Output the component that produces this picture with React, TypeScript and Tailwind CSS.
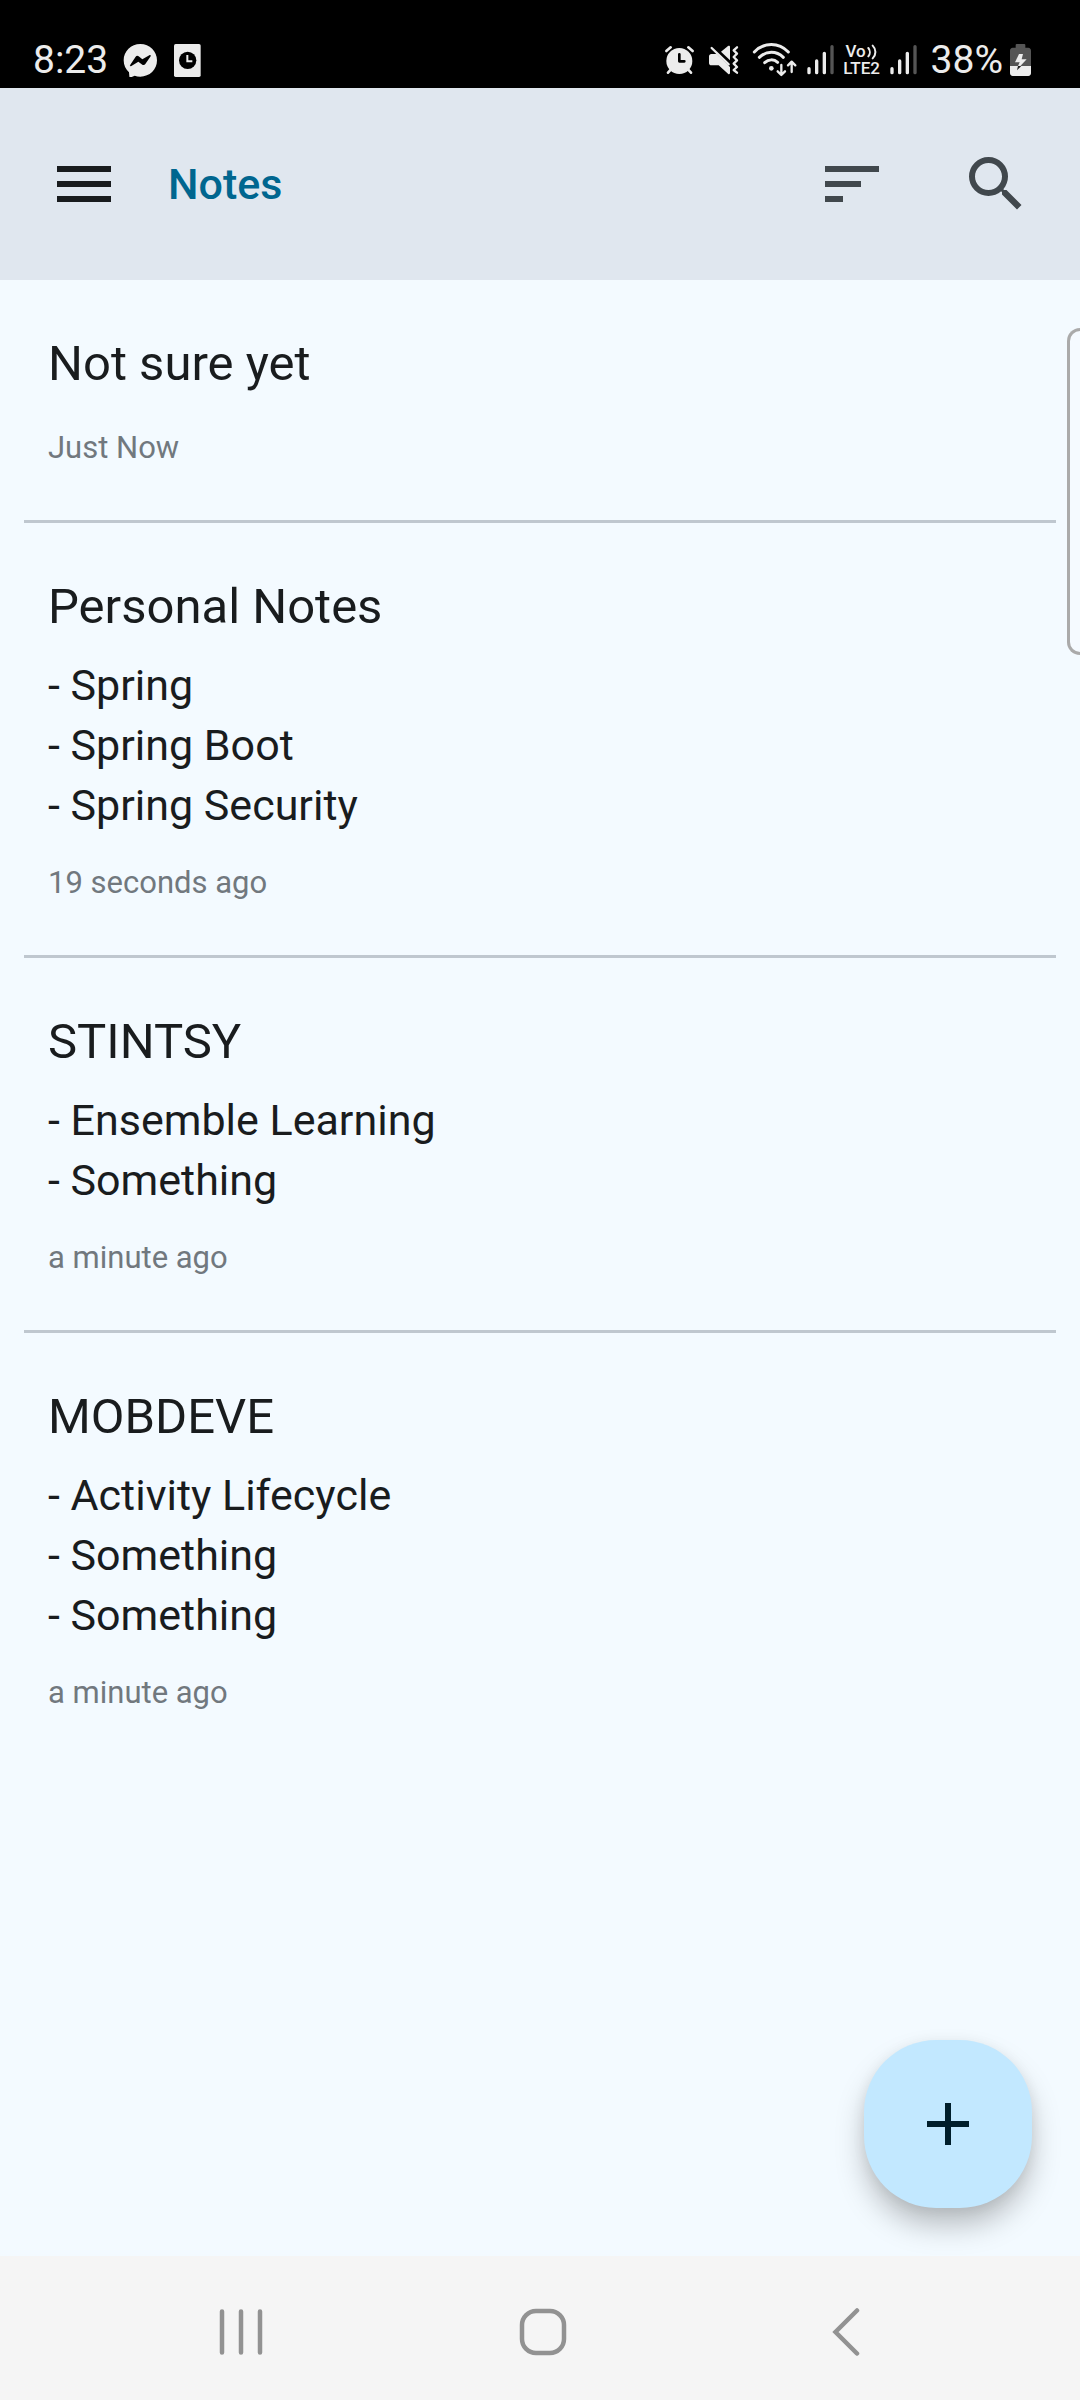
import React from "react";

type Note = { title: string; lines: string[]; time: string };

const notes: Note[] = [
  { title: "Not sure yet", lines: [], time: "Just Now" },
  {
    title: "Personal Notes",
    lines: ["- Spring", "- Spring Boot", "- Spring Security"],
    time: "19 seconds ago",
  },
  {
    title: "STINTSY",
    lines: ["- Ensemble Learning", "- Something"],
    time: "a minute ago",
  },
  {
    title: "MOBDEVE",
    lines: ["- Activity Lifecycle", "- Something", "- Something"],
    time: "a minute ago",
  },
];

function MessengerIcon() {
  return (
    <svg className="h-[34px] w-[35px]" viewBox="369 69 105 102" aria-hidden="true">
      <path
        fill="#ececec"
        d="M421 72C449 72 471 94 471 121C471 149 449 170 421 170C415 170 409 169 404 167L393 172C390 173 388 172 388 169L387 157C377 148 371 136 371 121C371 94 393 72 421 72Z"
      />
      <path
        fill="#000"
        d="M390 136L407 110C409 107 413 106 416 109L427 118L448 106C451 104 453 107 452 109L436 132C434 135 430 136 427 134L415 125L394 138C391 140 389 138 390 136Z"
      />
    </svg>
  );
}

function ClockCardIcon() {
  return (
    <svg className="h-[34px] w-[29px]" viewBox="519 69 87 102" aria-hidden="true">
      <rect x="522" y="72" width="80" height="99" rx="5" fill="#ececec" />
      <circle cx="563" cy="121" r="26" fill="#000" />
      <path d="M562 105V124H577" fill="none" stroke="#ececec" strokeWidth="6" />
    </svg>
  );
}

function AlarmIcon() {
  return (
    <svg className="h-[34px] w-[31px]" viewBox="69 69 93 102" aria-hidden="true">
      <g stroke="#ececec" strokeLinecap="round" strokeWidth="8" fill="none">
        <path d="M76 93L89 82M155 93L142 82M90 148L81 158M141 148L150 158" />
      </g>
      <circle cx="115" cy="123" r="39" fill="#ececec" />
      <path
        d="M115 103V124H130"
        fill="none"
        stroke="#000"
        strokeWidth="8"
        strokeLinecap="round"
        strokeLinejoin="round"
      />
    </svg>
  );
}

function MuteIcon() {
  return (
    <svg className="h-[34px] w-[31px]" viewBox="204 69 93 102" aria-hidden="true">
      <g fill="#ececec">
        <path d="M214 102H230L270 141V159C270 162 267 164 264 161L236 136H214C210 136 207 133 207 129V109C207 105 210 102 214 102Z" />
        <path d="M243 95L264 78C267 76 270 77 270 81V121Z" />
      </g>
      <path d="M215 84L266 133" stroke="#ececec" strokeWidth="7" strokeLinecap="round" />
      <path
        d="M291 82L281 91L291 101L281 111L291 121L281 131L291 141L281 150L291 158"
        fill="none"
        stroke="#ececec"
        strokeWidth="7"
        strokeLinecap="round"
        strokeLinejoin="round"
      />
    </svg>
  );
}

function WifiIcon() {
  return (
    <svg className="h-[34px] w-[45px]" viewBox="336 69 135 102" aria-hidden="true">
      <g fill="none" stroke="#ececec" strokeLinecap="round">
        <path d="M343 96C372 66 416 66 445 96" strokeWidth="9" />
        <path d="M358 112C379 92 409 92 430 112" strokeWidth="9" />
        <path d="M374 128C386 117 402 117 413 127" strokeWidth="9" />
        <g strokeWidth="7" strokeLinejoin="round">
          <path d="M424 135V164M413 154L424 165L435 154" />
          <path d="M455 156V126M444 136L455 125L466 136" />
        </g>
      </g>
      <circle cx="394" cy="145" r="7" fill="#ececec" />
    </svg>
  );
}

function SignalIcon() {
  return (
    <svg className="h-[34px] w-[29px]" viewBox="495 69 87 102" aria-hidden="true">
      <g strokeWidth="10" strokeLinecap="round">
        <path d="M504 146V158M527 123V158M550 100V158" stroke="#ececec" />
        <path d="M573 80V158" stroke="#555" />
      </g>
    </svg>
  );
}

function VolteBadge() {
  return (
    <div className="flex w-10 flex-col items-center text-[17px] leading-[17px] font-medium">
      <div className="flex items-center justify-center gap-px">
        <span>Vo</span>
        <svg className="h-4 w-[11px]" viewBox="0 0 33 48" aria-hidden="true">
          <g fill="none" stroke="#ececec" strokeWidth="6" strokeLinecap="round">
            <path d="M4 12C10 19 10 30 4 37" />
            <path d="M17 5C28 16 28 32 17 43" />
          </g>
        </svg>
      </div>
      <span>LTE2</span>
    </div>
  );
}

function BatteryIcon() {
  return (
    <svg className="h-[34px] w-[23px]" viewBox="507 69 69 102" aria-hidden="true">
      <path
        fill="#555"
        d="M530 72H553C555 72 556 73 556 75V83H565C570 83 573 87 573 92V140H510V92C510 87 513 83 518 83H527V75C527 73 528 72 530 72Z"
      />
      <path fill="#ececec" d="M510 138H573V159C573 164 570 168 565 168H518C513 168 510 164 510 159Z" />
      <path fill="#ececec" d="M537 102H549L545 118H560L541 138H534L539 127H525Z" />
      <path fill="#222" d="M534 138H544L531 151Z" />
    </svg>
  );
}

function StatusBar() {
  return (
    <div className="flex h-[88px] shrink-0 items-center bg-black pt-8 pr-12 pl-[33px] text-[39px] leading-none text-[#ececec]">
      <span>8:23</span>
      <div className="ml-[15px] flex items-center gap-[15px]">
        <MessengerIcon />
        <ClockCardIcon />
      </div>
      <div className="ml-auto flex items-center">
        <div className="mr-[9px] flex items-center gap-[13px]">
          <AlarmIcon />
          <MuteIcon />
          <WifiIcon />
        </div>
        <div className="flex items-center gap-[7px]">
          <SignalIcon />
          <VolteBadge />
          <SignalIcon />
        </div>
        <span className="mr-1.5 ml-[13px]">38%</span>
        <BatteryIcon />
      </div>
    </div>
  );
}

function AppBar() {
  return (
    <header className="flex h-48 shrink-0 items-center bg-[#e0e7ef] px-12">
      <button type="button" aria-label="Open menu" className="text-[#191c1e]">
        <svg className="size-[72px]" viewBox="0 0 24 24" fill="currentColor">
          <path d="M3 6h18v2H3zM3 11h18v2H3zM3 16h18v2H3z" />
        </svg>
      </button>
      <h1 className="ml-12 text-[43px] leading-[60px] font-medium text-[#00668f]">Notes</h1>
      <div className="ml-auto flex items-center gap-[72px] text-[#41484d]">
        <button type="button" aria-label="Sort notes">
          <svg className="size-[72px]" viewBox="0 0 24 24" fill="currentColor">
            <path d="M3 6h18v2H3zM3 11h12v2H3zM3 16h6v2H3z" />
          </svg>
        </button>
        <button type="button" aria-label="Search notes">
          <svg className="size-[72px]" viewBox="0 0 24 24" fill="currentColor">
            <path d="M9.5 3A6.5 6.5 0 0 1 16 9.5C16 11.11 15.41 12.59 14.44 13.73L14.71 14H15.5L20.5 19L19 20.5L14 15.5V14.71L13.73 14.44C12.59 15.41 11.11 16 9.5 16A6.5 6.5 0 0 1 3 9.5A6.5 6.5 0 0 1 9.5 3M9.5 5C7 5 5 7 5 9.5C5 12 7 14 9.5 14C12 14 14 12 14 9.5C14 7 12 5 9.5 5Z" />
          </svg>
        </button>
      </div>
    </header>
  );
}

function NoteItem({ note }: { note: Note }) {
  return (
    <li className="px-6 py-12">
      <h2 className="text-[49px] leading-[72px]">{note.title}</h2>
      {note.lines.length > 0 && (
        <div className="mt-3 text-[43px] leading-[60px]">
          {note.lines.map((line, i) => (
            <p key={i}>{line}</p>
          ))}
        </div>
      )}
      <p className="mt-6 text-[31px] leading-[48px] text-[#71787e]">{note.time}</p>
    </li>
  );
}

function NavigationBar() {
  return (
    <nav className="grid h-36 shrink-0 grid-cols-3 bg-[#f5f5f5] pr-[84px] pl-[90px] text-[#929292]">
      <button type="button" aria-label="Recent apps" className="flex items-center justify-center pt-2">
        <svg className="size-12" viewBox="0 0 48 48" stroke="currentColor" strokeWidth="4.5" strokeLinecap="round">
          <path d="M5 3.5V44.5M24 3.5V44.5M43 3.5V44.5" />
        </svg>
      </button>
      <button type="button" aria-label="Home" className="flex items-center justify-center pt-2">
        <svg className="size-12" viewBox="0 0 48 48" fill="none" stroke="currentColor" strokeWidth="4.5">
          <rect x="3" y="3" width="42" height="42" rx="14" />
        </svg>
      </button>
      <button type="button" aria-label="Back" className="flex items-center justify-center pt-2">
        <svg className="size-12" viewBox="0 0 48 48" fill="none" stroke="currentColor" strokeWidth="4.5" strokeLinecap="round">
          <path d="M36 2.5L14.5 24L36 45.5" />
        </svg>
      </button>
    </nav>
  );
}

export default function App() {
  return (
    <div className="flex min-h-screen flex-col bg-[#f3faff] font-['Roboto',sans-serif] text-[#191c1e]">
      <StatusBar />
      <AppBar />
      <main className="relative grow overflow-hidden px-6">
        <ul className="divide-y-[3px] divide-[#bfc7cf]">
          {notes.map((note) => (
            <NoteItem key={note.title} note={note} />
          ))}
        </ul>
        <div className="absolute top-12 right-0 h-[327px] w-[13px] rounded-l-[14px] border-[3px] border-r-0 border-[#aaaaaa] bg-[#f5faff]" />
        <button
          type="button"
          aria-label="Add note"
          className="absolute right-12 bottom-12 flex size-[168px] items-center justify-center rounded-[72px] bg-[#c2e8ff] text-[#001e2b] shadow-[0_18px_30px_-2px_rgba(0,0,0,0.26),0_2px_14px_rgba(0,0,0,0.06)]"
        >
          <svg className="size-[72px]" viewBox="0 0 24 24" fill="currentColor">
            <path d="M19 13H13V19H11V13H5V11H11V5H13V11H19Z" />
          </svg>
        </button>
      </main>
      <NavigationBar />
    </div>
  );
}
